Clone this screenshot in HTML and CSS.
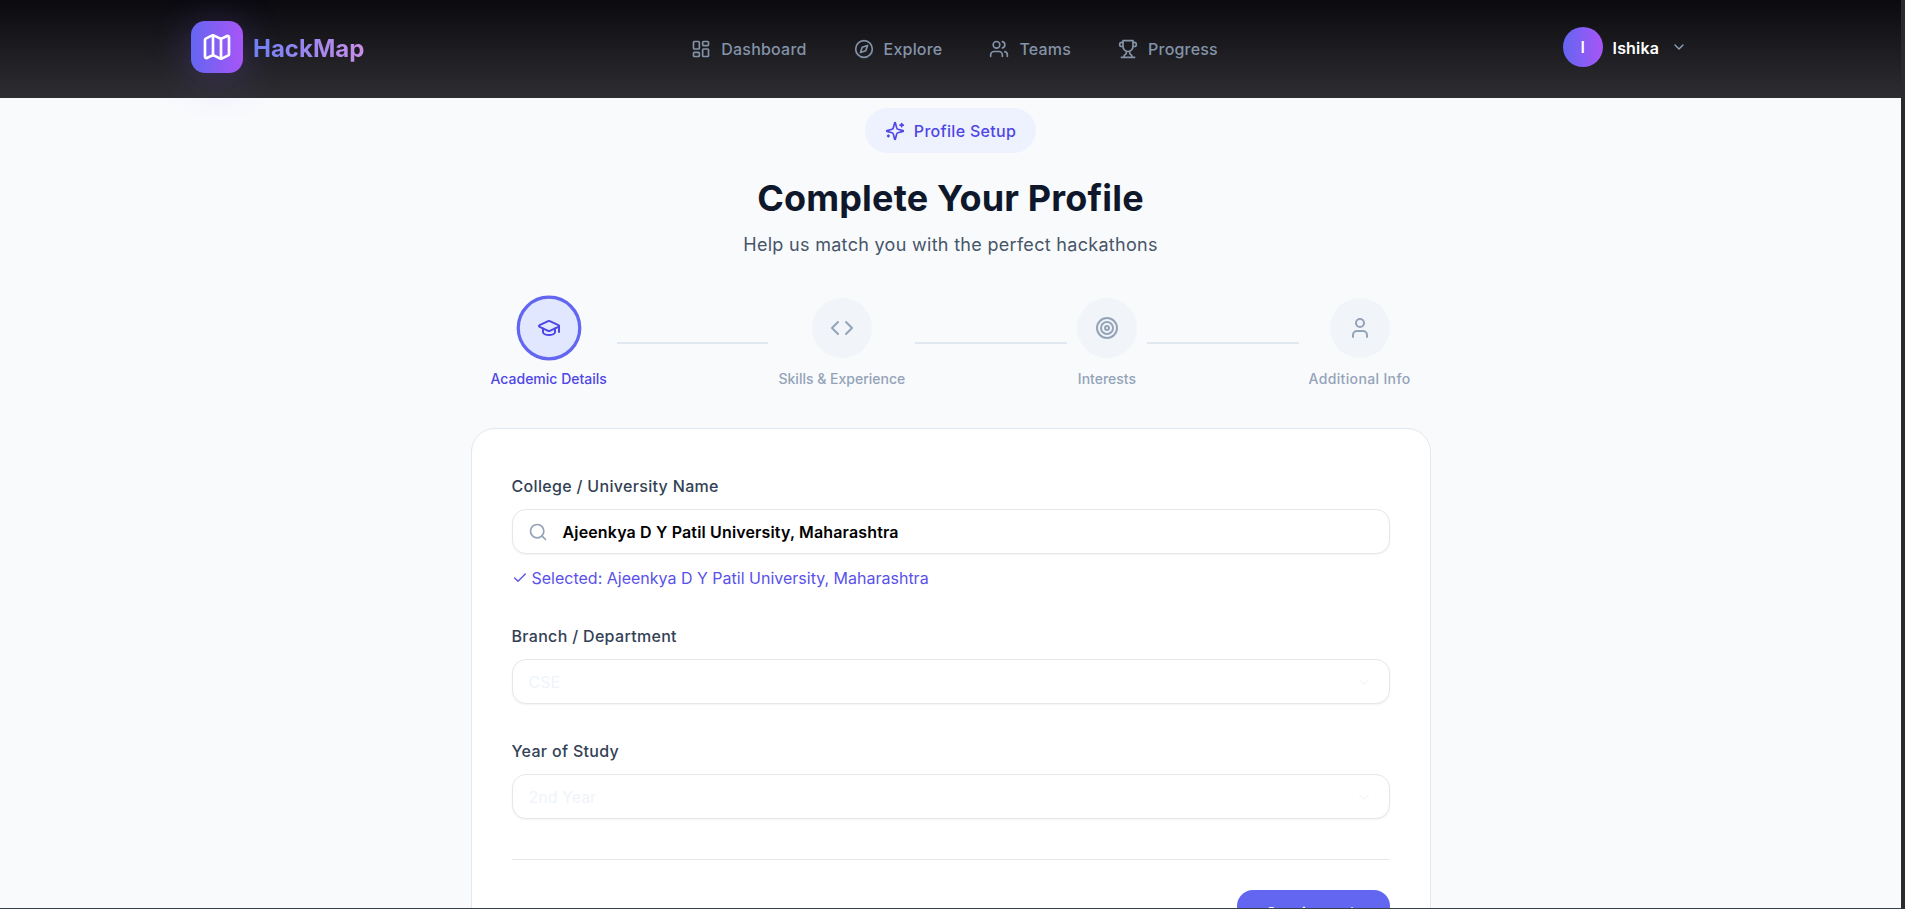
FILE: index.html
```html
<!DOCTYPE html>
<html lang="en">
  <head>
    <meta charset="UTF-8" />
    <meta name="viewport" content="width=device-width, initial-scale=1.0" />
    <title>HackMap - Complete Your Profile</title>
    <link rel="stylesheet" href="styles.css">
  </head>
  <body>
    <div class="window">
      <header class="topbar">
        <a class="brand">
          <span class="brand-icon">
            <svg class="icon" width="32" height="32" viewBox="0 0 24 24"><path d="M14.106 5.553a2 2 0 0 0 1.788 0l3.659-1.83A1 1 0 0 1 21 4.619v12.764a1 1 0 0 1-.553.894l-4.553 2.277a2 2 0 0 1-1.788 0l-4.212-2.106a2 2 0 0 0-1.788 0l-3.659 1.83A1 1 0 0 1 3 19.381V6.618a1 1 0 0 1 .553-.894l4.553-2.277a2 2 0 0 1 1.788 0z"/><path d="M15 5.764v15"/><path d="M9 3.236v15"/></svg>
          </span>
          <span class="brand-name">HackMap</span>
        </a>
        <nav class="nav">
          <a class="nav-link">
            <svg class="icon" width="20" height="20" viewBox="0 0 24 24"><rect x="3" y="3" width="7" height="9" rx="1"/><rect x="14" y="3" width="7" height="5" rx="1"/><rect x="14" y="12" width="7" height="9" rx="1"/><rect x="3" y="16" width="7" height="5" rx="1"/></svg>
            Dashboard
          </a>
          <a class="nav-link">
            <svg class="icon" width="20" height="20" viewBox="0 0 24 24"><circle cx="12" cy="12" r="10"/><path d="m16.24 7.76-2.12 6.36-6.36 2.12 2.12-6.36 6.36-2.12z"/></svg>
            Explore
          </a>
          <a class="nav-link">
            <svg class="icon" width="20" height="20" viewBox="0 0 24 24"><path d="M16 21v-2a4 4 0 0 0-4-4H6a4 4 0 0 0-4 4v2"/><circle cx="9" cy="7" r="4"/><path d="M22 21v-2a4 4 0 0 0-3-3.87"/><path d="M16 3.13a4 4 0 0 1 0 7.75"/></svg>
            Teams
          </a>
          <a class="nav-link">
            <svg class="icon" width="20" height="20" viewBox="0 0 24 24"><path d="M6 9H4.5a2.5 2.5 0 0 1 0-5H6"/><path d="M18 9h1.5a2.5 2.5 0 0 0 0-5H18"/><path d="M4 22h16"/><path d="M10 14.66V17c0 .55-.47.98-.97 1.21C7.85 18.75 7 20.24 7 22"/><path d="M14 14.66V17c0 .55.47.98.97 1.21C16.15 18.75 17 20.24 17 22"/><path d="M18 2H6v7a6 6 0 0 0 12 0V2Z"/></svg>
            Progress
          </a>
        </nav>
        <div class="user">
          <span class="avatar">I</span>
          <span class="user-name">Ishika</span>
          <svg class="icon user-chevron" width="16" height="16" viewBox="0 0 24 24"><path d="m6 9 6 6 6-6"/></svg>
        </div>
      </header>

      <main class="page">
        <div class="badge">
          <svg class="icon" width="20" height="20" viewBox="0 0 24 24"><path d="M9.937 15.5A2 2 0 0 0 8.5 14.063l-6.135-1.582a.5.5 0 0 1 0-.962L8.5 9.936A2 2 0 0 0 9.937 8.5l1.582-6.135a.5.5 0 0 1 .963 0L14.063 8.5A2 2 0 0 0 15.5 9.937l6.135 1.581a.5.5 0 0 1 0 .964L15.5 14.063a2 2 0 0 0-1.437 1.437l-1.582 6.135a.5.5 0 0 1-.963 0z"/><path d="M20 3v4"/><path d="M22 5h-4"/><path d="M4 17v2"/><path d="M5 18H3"/></svg>
          Profile Setup
        </div>
        <h1 class="title">Complete Your Profile</h1>
        <p class="subtitle">Help us match you with the perfect hackathons</p>

        <div class="stepper">
          <div class="step step-active">
            <span class="step-circle">
              <svg class="icon" width="24" height="24" viewBox="0 0 24 24"><path d="M21.42 10.922a1 1 0 0 0-.019-1.838L12.83 5.18a2 2 0 0 0-1.66 0L2.6 9.08a1 1 0 0 0 0 1.832l8.57 3.908a2 2 0 0 0 1.66 0z"/><path d="M22 10v6"/><path d="M6 12.5V16a6 3 0 0 0 12 0v-3.5"/></svg>
            </span>
            <span class="step-label">Academic Details</span>
          </div>
          <div class="step-line"></div>
          <div class="step">
            <span class="step-circle">
              <svg class="icon" width="24" height="24" viewBox="0 0 24 24"><path d="m16 18 6-6-6-6"/><path d="m8 6-6 6 6 6"/></svg>
            </span>
            <span class="step-label">Skills &amp; Experience</span>
          </div>
          <div class="step-line"></div>
          <div class="step">
            <span class="step-circle">
              <svg class="icon" width="24" height="24" viewBox="0 0 24 24"><circle cx="12" cy="12" r="10"/><circle cx="12" cy="12" r="6"/><circle cx="12" cy="12" r="2"/></svg>
            </span>
            <span class="step-label">Interests</span>
          </div>
          <div class="step-line"></div>
          <div class="step">
            <span class="step-circle">
              <svg class="icon" width="24" height="24" viewBox="0 0 24 24"><path d="M19 21v-2a4 4 0 0 0-4-4H9a4 4 0 0 0-4 4v2"/><circle cx="12" cy="7" r="4"/></svg>
            </span>
            <span class="step-label step-label-wide">Additional Info</span>
          </div>
        </div>

        <section class="card">
          <div class="field field-first">
            <div class="field-label">College / University Name</div>
            <div class="control">
              <svg class="icon control-search" width="20" height="20" viewBox="0 0 24 24"><path d="m21 21-4.3-4.3"/><circle cx="11" cy="11" r="8"/></svg>
              <span class="control-value">Ajeenkya D Y Patil University, Maharashtra</span>
            </div>
            <div class="hint">
              <svg class="icon" width="16" height="16" viewBox="0 0 24 24"><path d="M20 6 9 17l-5-5"/></svg>
              Selected: Ajeenkya D Y Patil University, Maharashtra
            </div>
          </div>

          <div class="field">
            <div class="field-label">Branch / Department</div>
            <div class="control control-select">
              <span>CSE</span>
              <svg class="icon" width="18" height="18" viewBox="0 0 24 24"><path d="m6 9 6 6 6-6"/></svg>
            </div>
          </div>

          <div class="field">
            <div class="field-label">Year of Study</div>
            <div class="control control-select">
              <span>2nd Year</span>
              <svg class="icon" width="18" height="18" viewBox="0 0 24 24"><path d="m6 9 6 6 6-6"/></svg>
            </div>
          </div>

          <div class="actions">
            <button class="btn-next">
              Continue
              <svg class="icon" width="18" height="18" viewBox="0 0 24 24"><path d="M5 12h14"/><path d="m12 5 7 7-7 7"/></svg>
            </button>
          </div>
        </section>
      </main>
    </div>
  </body>
</html>
```

FILE: styles.css
```css
* {
  box-sizing: border-box;
}

html,
body {
  height: 100%;
}

body {
  margin: 0;
  overflow: hidden;
  background-color: #2b2b2d;
  font-family: Inter, "Noto Sans", sans-serif;
  color: #0f172a;
}

.icon {
  flex-shrink: 0;
  fill: none;
  stroke: currentColor;
  stroke-width: 2;
  stroke-linecap: round;
  stroke-linejoin: round;
}

.window {
  display: flex;
  flex-direction: column;
  width: 1901px;
  height: 908px;
  overflow: hidden;
  background-color: #f8fafc;
  box-shadow: 0 1px 0 #374151;
}

/* top bar */
.topbar {
  position: relative;
  z-index: 1;
  display: flex;
  align-items: center;
  flex-shrink: 0;
  height: 98px;
  padding: 0 214px 5px 191px;
  background: linear-gradient(180deg, #0a0a0f 0%, #2e2e32 100%);
}

.brand {
  display: flex;
  align-items: center;
  gap: 10px;
}

.brand-icon {
  display: flex;
  justify-content: center;
  align-items: center;
  width: 52px;
  height: 52px;
  border-radius: 14px;
  color: white;
  background: linear-gradient(90deg, #6366f1, #a855f7);
  box-shadow: 0 4px 40px rgba(139, 92, 246, 0.28);
}

.brand-name {
  padding-top: 3px;
  font-size: 24px;
  font-weight: 700;
  background: linear-gradient(90deg, #6f7ff5, #c98ee8);
  -webkit-background-clip: text;
  background-clip: text;
  color: transparent;
}

.nav {
  display: flex;
  align-items: center;
  gap: 47px;
  margin-top: 4px;
  margin-left: 327px;
}

.nav-link {
  display: flex;
  align-items: center;
  gap: 10px;
  font-size: 16px;
  font-weight: 500;
  letter-spacing: 0.2px;
  color: #8493a8;
}

.user {
  display: flex;
  align-items: center;
  margin-left: auto;
}

.avatar {
  display: flex;
  justify-content: center;
  align-items: center;
  width: 40px;
  height: 40px;
  border-radius: 50%;
  font-size: 16px;
  font-weight: 600;
  color: white;
  background: linear-gradient(90deg, #6366f1, #a855f7);
}

.user-name {
  margin-left: 10px;
  padding-top: 2px;
  font-size: 16px;
  font-weight: 600;
  letter-spacing: 0.15px;
  color: white;
}

.user-chevron {
  margin-left: 12px;
  color: #94a3b8;
}

/* page */
.page {
  display: flex;
  flex-direction: column;
  align-items: center;
  padding-top: 10px;
}

.badge {
  display: flex;
  align-items: center;
  gap: 9px;
  height: 45px;
  padding: 0 20px;
  border-radius: 23px;
  font-size: 16px;
  font-weight: 500;
  letter-spacing: 0.3px;
  color: #4f46e5;
  background-color: #eef2ff;
}

.title {
  margin: 23px 0 0;
  font-size: 36px;
  line-height: 44px;
  font-weight: 700;
  letter-spacing: 0.17px;
  color: #0f172a;
}

.subtitle {
  margin: 11px 0 0;
  font-size: 18px;
  line-height: 28px;
  letter-spacing: 0.3px;
  color: #475569;
}

/* steps */
.stepper {
  display: flex;
  width: 960px;
  margin-top: 39px;
  padding: 0 20px;
}

.step {
  display: flex;
  flex-direction: column;
  align-items: center;
  flex-shrink: 0;
}

.step-circle {
  display: flex;
  justify-content: center;
  align-items: center;
  width: 60px;
  height: 60px;
  border-radius: 50%;
  color: #94a3b8;
  background-color: #f1f5f9;
}

.step-label {
  margin-top: 11px;
  font-size: 14px;
  line-height: 20px;
  font-weight: 500;
  color: #94a3b8;
}

.step-label-wide {
  letter-spacing: 0.35px;
}

.step-line {
  flex: 1;
  height: 2px;
  margin: 44px 10px 0;
  background-color: #e2e8f0;
}

.step-active .step-circle {
  color: #4f46e5;
  background-color: #e0e7ff;
  border: 3px solid #6366f1;
  transform: scale(1.08);
}

.step-active .step-circle .icon {
  transform: scale(0.926);
}

.step-active .step-label {
  color: #4f46e5;
}

/* form card */
.card {
  flex-shrink: 0;
  width: 960px;
  margin-top: 39px;
  padding: 45px 40px 40px;
  border: 1px solid #e2e8f0;
  border-radius: 24px;
  background-color: white;
}

.field {
  margin-bottom: 35px;
}

.field-first {
  margin-bottom: 34px;
}

.field-label {
  margin-bottom: 11px;
  font-size: 16px;
  line-height: 24px;
  font-weight: 500;
  letter-spacing: 0.32px;
  color: #334155;
}

.control {
  display: flex;
  align-items: center;
  height: 45px;
  padding: 0 16px;
  border: 1px solid #e5e7eb;
  border-radius: 14px;
  font-size: 16px;
  background-color: white;
  box-shadow: 0 1px 2px rgba(0, 0, 0, 0.05);
}

.control-search {
  margin-left: -1px;
  color: #94a3b8;
}

.control-value {
  margin-left: 15px;
  font-weight: 600;
  letter-spacing: 0.15px;
  color: black;
}

.control-select {
  justify-content: space-between;
  color: #eff4fa;
}

.control-select .icon {
  color: #f4f6f9;
  stroke-width: 1.5;
}

.hint {
  display: flex;
  align-items: center;
  gap: 4px;
  margin-top: 12px;
  font-size: 16px;
  line-height: 24px;
  color: #5a51ea;
}

.actions {
  display: flex;
  justify-content: flex-end;
  margin-top: 40px;
  padding-top: 30px;
  border-top: 1px solid #e5e7eb;
}

.btn-next {
  display: flex;
  align-items: center;
  justify-content: center;
  gap: 8px;
  width: 153px;
  height: 46px;
  border: 0;
  border-radius: 16px;
  font-family: inherit;
  font-size: 16px;
  font-weight: 600;
  color: white;
  background-color: #6366f1;
}
```
